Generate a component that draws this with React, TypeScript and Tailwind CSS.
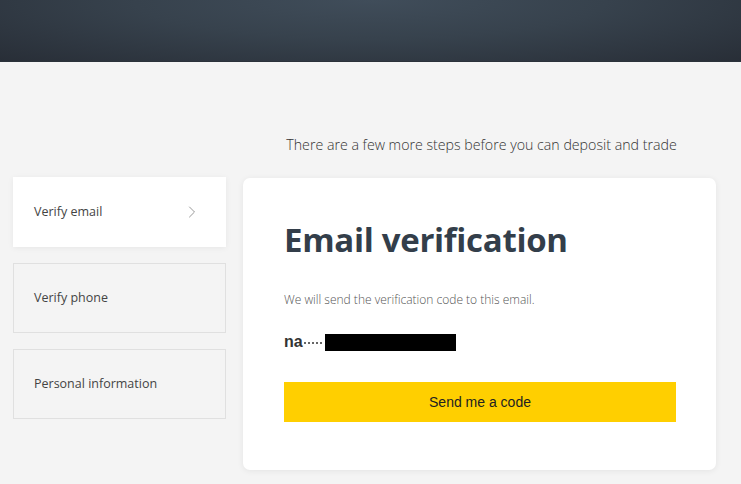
import { ChevronRight } from 'lucide-react';

const steps = [
  { label: 'Verify email', active: true },
  { label: 'Verify phone', active: false },
  { label: 'Personal information', active: false },
];

export default function App() {
  return (
    <div className="min-h-screen bg-[#f4f4f4] font-['Open_Sans','Noto_Sans',sans-serif] text-[#333]">
      <header className="h-[62px] bg-[radial-gradient(ellipse_at_50%_0%,#404d5a_0%,#37424d_45%,#282e37_100%)] border-b border-[#2b323a]" />

      <div className="pl-[13px] pr-[25px] pt-[72px] pb-[14px]">
        <div className="flex gap-[17px] h-[43px]">
          <div className="w-[213px] shrink-0" />
          <p className="flex-1 text-center text-[14.2px] font-light text-[#333] pl-[4px]">
            There are a few more steps before you can deposit and trade
          </p>
        </div>

        <div className="flex gap-[17px] items-start">
          <div className="w-[213px] shrink-0 flex flex-col gap-[16px]">
            {steps.map(step => (
              <div
                key={step.label}
                className={
                  step.active
                    ? 'h-[70px] bg-white shadow-[0_1px_6px_rgba(0,0,0,0.06)] flex items-center justify-between pl-[21px] pr-[24px]'
                    : 'h-[70px] border border-[#e0e0e0] flex items-center pl-[20px]'
                }
              >
                <span className="text-[12.5px] text-[#444]">{step.label}</span>
                {step.active && <ChevronRight size={20} strokeWidth={1.2} className="text-[#999]" />}
              </div>
            ))}
          </div>

          <div className="flex-1 mt-[1px] bg-white rounded-[7px] shadow-[0_1px_6px_rgba(0,0,0,0.07)] pl-[41px] pr-[40px] pt-[38px] pb-[48px]">
            <h1 className="text-[33px] font-bold text-[#333e4a] leading-[48px] tracking-[-0.3px]">Email verification</h1>
            <p className="mt-[27px] text-[12px] font-light text-[#555]">We will send the verification code to this email.</p>
            <div className="mt-[23px] flex items-center h-[20px]">
              <span className="text-[16px] font-bold text-[#333] font-['Liberation_Sans',sans-serif]">na</span>
              <span className="flex gap-[2px] ml-[1px] mt-[2px]">
                {[0, 1, 2, 3, 4].map(i => (
                  <span key={i} className="w-[2px] h-[2px] bg-[#666]" />
                ))}
              </span>
              <span className="ml-[3px] w-[131px] h-[17px] bg-black" />
            </div>
            <button className="mt-[30px] w-full h-[40px] bg-[#ffcf00] text-[14px] text-[#222] font-['Liberation_Sans',sans-serif]">
              Send me a code
            </button>
          </div>
        </div>
      </div>
    </div>
  );
}
